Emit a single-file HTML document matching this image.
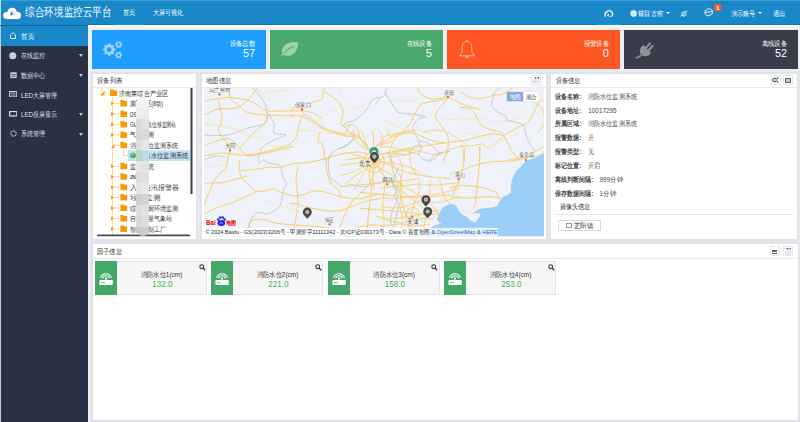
<!DOCTYPE html>
<html><head><meta charset="utf-8">
<title>综合环境监控云平台</title>
<style>
*{margin:0;padding:0;box-sizing:border-box}
html,body{width:800px;height:422px;overflow:hidden}
body{position:relative;background:#eef0f6;font-family:"Liberation Sans",sans-serif;color:#333}
.a{position:absolute}
.caret{position:absolute;left:78.5px;width:0;height:0;border-left:2.5px solid transparent;border-right:2.5px solid transparent;border-top:3px solid #c5c9d0}
.card{position:absolute;top:30px;height:39px}
.panel{position:absolute;background:#fff;box-shadow:0 0 0 2.6px #e2e3e8}
</style></head><body>

<div class="a" style="left:0;top:0;width:800px;height:25px;background:#1888c8;border-top:1px solid #3a9ad2"></div>
<div class="a" style="left:88px;top:24px;width:712px;height:1px;background:#1679b6"></div>
<div class="a" style="left:0;top:0;width:1px;height:25px;background:#cfdbe6"></div>
<svg class="a" style="left:0;top:0" width="24" height="24" viewBox="0 0 24 24">
<g fill="#fff"><circle cx="6.7" cy="15.6" r="3.5"/><circle cx="12.1" cy="12.4" r="4.7"/><circle cx="17.3" cy="15.4" r="3.7"/><rect x="6.7" y="14" width="10.6" height="5.1"/></g>
<path d="M13.6 11.3 C11.6 11.3 10.2 13 10.4 14.6 C10.5 15.6 11.6 15.8 12.4 15 L14.2 13.3 C13.2 14.1 12 14 12.1 13.1 C12.2 12.2 13 11.6 13.6 11.3 Z" fill="#1a7fc4"/>
<path d="M14.2 12.2 C15.2 12.6 15.6 13.6 14.8 14.6 C14.2 15.3 13 15.6 12.6 15.3 C13.6 15 14.6 13.8 14.2 12.2 Z" fill="#8cc3e8"/>
</svg>
<div class="a" style="left:114px;top:24px;width:30px;height:2px;background:#00a6ec"></div>
<div class="a" style="left:597px;top:24px;width:24px;height:2px;background:#00a6ec"></div>
<svg class="a" style="left:604px;top:9.5px" width="10" height="8" viewBox="0 0 10 8"><path d="M1.6 6.8 A3.9 3.9 0 1 1 8.6 5.6" stroke="#f2f7fb" stroke-width="1.3" fill="none"/><path d="M2.5 5.5 L5.2 3.6 L4.6 6.2 Z" fill="#f2f7fb"/><path d="M5.5 6.5 L8.8 5.8" stroke="#f2f7fb" stroke-width="1"/><circle cx="3.2" cy="3" r="0.6" fill="#f2f7fb"/></svg>
<svg class="a" style="left:629.5px;top:9.8px" width="7.5" height="7" viewBox="0 0 7.5 7"><circle cx="3.6" cy="3.5" r="3.2" fill="#eaf3fa"/><path d="M1 2.6 Q3.6 3.6 6.2 2.6 M1 4.5 Q3.6 5.4 6.2 4.5" stroke="#9fcbe6" stroke-width="0.6" fill="none"/></svg>
<div class="a" style="left:665.5px;top:11.5px;border-left:2.3px solid transparent;border-right:2.3px solid transparent;border-top:2.8px solid #fff"></div>
<svg class="a" style="left:680px;top:9.5px" width="8" height="7" viewBox="0 0 8 7"><path d="M0.6 6.4 L7.4 0.6" stroke="#f4f8fb" stroke-width="0.9"/><path d="M2.2 2.4 Q4 1 5.6 2.4 L6.2 5.2 H1.8 Z" stroke="#f4f8fb" stroke-width="0.8" fill="none"/><circle cx="4" cy="6.2" r="0.7" fill="#f4f8fb"/></svg>
<svg class="a" style="left:704px;top:8.3px" width="9.5" height="8.5" viewBox="0 0 9.5 8.5"><ellipse cx="4.7" cy="4.3" rx="3.9" ry="3.3" transform="rotate(-20 4.7 4.3)" stroke="#eef5fa" stroke-width="0.9" fill="none"/><path d="M1.2 4.8 Q4.7 3.2 8.2 3.6" stroke="#eef5fa" stroke-width="0.8" fill="none"/><circle cx="4.8" cy="5" r="0.6" fill="#eef5fa"/></svg>
<div class="a" style="left:713.7px;top:3.6px;width:7.8px;height:7.2px;background:#ff5722;border-radius:1px"></div>
<div class="a" style="left:758px;top:11.5px;border-left:2.2px solid transparent;border-right:2.2px solid transparent;border-top:2.8px solid #fff"></div>

<!-- sidebar -->
<div class="a" style="left:0;top:25px;width:88px;height:397px;background:#293144;border-left:1px solid #c9ccd3"></div>
<div class="a" style="left:0;top:25px;width:88px;height:1px;background:#16608f"></div>
<div class="a" style="top:26px;background:#1888c8;left:1px;width:87px;height:19.6px"></div>
<svg class="a" style="left:10px;top:32px" width="6" height="7" viewBox="0 0 6 7"><path d="M0.5 3 L3 0.6 L5.5 3 V6.5 H0.5 Z" stroke="#fff" stroke-width="0.8" fill="none"/></svg>
<svg class="a" style="left:9.3px;top:51.5px" width="7.6" height="7.6" viewBox="0 0 7.6 7.6"><circle cx="3.8" cy="3.8" r="3.5" fill="#d5d9e1"/><path d="M1 3 Q3.8 4 6.6 3 M1.2 5 Q3.8 5.8 6.4 5" stroke="#a9afba" stroke-width="0.5" fill="none"/></svg>
<div class="caret" style="top:54px"></div>
<svg class="a" style="left:9.6px;top:72.4px" width="7" height="6.4" viewBox="0 0 7 6.4"><rect x="0.3" y="0.3" width="6.4" height="5.8" fill="#cfd3db"/><rect x="1.2" y="2" width="4.6" height="0.8" fill="#3a4255"/><rect x="1.2" y="3.8" width="4.6" height="0.8" fill="#3a4255"/></svg>
<div class="caret" style="top:73.5px"></div>
<svg class="a" style="left:9px;top:91px" width="8.2" height="6.4" viewBox="0 0 8.2 6.4"><rect x="0.5" y="0.5" width="7.2" height="5.4" stroke="#c9cdd5" stroke-width="1" fill="#4a5163"/><path d="M2.8 1.2 V5.2 M4.1 1.2 V5.2 M5.4 1.2 V5.2" stroke="#b9a0a8" stroke-width="0.6"/></svg>
<svg class="a" style="left:9px;top:110.6px" width="8.4" height="6.6" viewBox="0 0 8.4 6.6"><rect x="0.6" y="0.6" width="7.2" height="4.3" stroke="#e3e6ec" stroke-width="1.1" fill="none"/><path d="M3.2 6.1 H5.2" stroke="#e3e6ec" stroke-width="1"/></svg>
<div class="caret" style="top:113px"></div>
<svg class="a" style="left:9.5px;top:130px" width="7" height="7" viewBox="0 0 7 7"><circle cx="3.5" cy="3.5" r="2.6" stroke="#d0d3da" stroke-width="1.2" fill="none" stroke-dasharray="1 0.6"/></svg>
<div class="caret" style="top:132.5px"></div>

<div class="a" style="left:88px;top:25px;width:712px;height:2px;background:#fbfbfd"></div>
<div class="a" style="left:88px;top:25px;width:2px;height:397px;background:#eef1f8"></div>

<div class="card" style="left:92px;width:174px;background:#1e9fff"></div>
<div class="card" style="left:270px;width:173px;background:#4aa96c"></div>
<div class="card" style="left:447px;width:173px;background:#ff5722"></div>
<div class="card" style="left:624px;width:174px;background:#393d49"></div>
<svg class="a" style="left:92px;top:30px" width="40" height="39" viewBox="92 30 40 39">
<path fill-rule="evenodd" fill="#9fd2ff" d="M115.57,48.97 L115.57,50.23 L113.98,51.05 L113.61,51.96 L114.15,53.66 L113.26,54.55 L111.56,54.01 L110.65,54.38 L109.83,55.97 L108.57,55.97 L107.75,54.38 L106.84,54.01 L105.14,54.55 L104.25,53.66 L104.79,51.96 L104.42,51.05 L102.83,50.23 L102.83,48.97 L104.42,48.15 L104.79,47.24 L104.25,45.54 L105.14,44.65 L106.84,45.19 L107.75,44.82 L108.57,43.23 L109.83,43.23 L110.65,44.82 L111.56,45.19 L113.26,44.65 L114.15,45.54 L113.61,47.24 L113.98,48.15 Z M111.60000000000001,49.6 A2.4,2.4 0 1 0 106.8,49.6 A2.4,2.4 0 1 0 111.60000000000001,49.6 Z"/>
<path fill-rule="evenodd" fill="#9fd2ff" d="M122.27,44.12 L122.27,45.08 L121.19,45.67 L120.82,46.30 L120.85,47.54 L120.02,48.02 L118.97,47.38 L118.23,47.38 L117.18,48.02 L116.35,47.54 L116.38,46.30 L116.01,45.67 L114.93,45.08 L114.93,44.12 L116.01,43.53 L116.38,42.90 L116.35,41.66 L117.18,41.18 L118.23,41.82 L118.97,41.82 L120.02,41.18 L120.85,41.66 L120.82,42.90 L121.19,43.53 Z M119.89999999999999,44.6 A1.3,1.3 0 1 0 117.3,44.6 A1.3,1.3 0 1 0 119.89999999999999,44.6 Z"/>
<path fill-rule="evenodd" fill="#9fd2ff" d="M122.27,54.52 L122.27,55.48 L121.19,56.07 L120.82,56.70 L120.85,57.94 L120.02,58.42 L118.97,57.78 L118.23,57.78 L117.18,58.42 L116.35,57.94 L116.38,56.70 L116.01,56.07 L114.93,55.48 L114.93,54.52 L116.01,53.93 L116.38,53.30 L116.35,52.06 L117.18,51.58 L118.23,52.22 L118.97,52.22 L120.02,51.58 L120.85,52.06 L120.82,53.30 L121.19,53.93 Z M119.89999999999999,55.0 A1.3,1.3 0 1 0 117.3,55.0 A1.3,1.3 0 1 0 119.89999999999999,55.0 Z"/>
</svg>
<svg class="a" style="left:278px;top:40px" width="22" height="18" viewBox="278 40 22 18">
<path d="M298 42.2 C290 41.5 283.5 44 282 50 C281.7 51.5 282 53 282.6 54 L281 55.7 L282 56.3 L283.6 54.8 C285 55.8 287.5 56 290 55.5 C296 54 298.3 48 298 42.2 Z" fill="#9dd0ae"/>
<path d="M284.5 53 C287 49.5 290 47.5 294 46.5" stroke="#4aa96c" stroke-width="1" fill="none"/>
</svg>
<svg class="a" style="left:457px;top:39px" width="20" height="21" viewBox="457 39 20 21">
<path d="M467 41.5 C463 41.5 462.2 45 462.2 48 L462.2 52 L459.5 55.8 L474.5 55.8 L471.8 52 L471.8 48 C471.8 45 471 41.5 467 41.5 Z" fill="none" stroke="#ffc1a8" stroke-width="0.9"/>
<circle cx="467" cy="41" r="0.9" fill="#ffc1a8"/>
<path d="M465.2 56.5 A1.8 1.8 0 0 0 468.8 56.5" fill="#ffc1a8"/>
</svg>
<svg class="a" style="left:633px;top:39px" width="23" height="22" viewBox="633 39 23 22">
<path d="M643.5 45 L651 52.5 C649 56.5 644.5 57.5 641.5 55 C638.8 52.3 639.5 47.5 643.5 45 Z" fill="#8e929b"/>
<path d="M646.2 47.5 L650 43.5 M648.8 50 L652.6 46" stroke="#8e929b" stroke-width="2" stroke-linecap="round"/>
<path d="M641 55.5 L636.5 58" stroke="#8e929b" stroke-width="1.6" stroke-linecap="round"/>
</svg>


<div class="panel" style="left:93px;top:74px;width:103px;height:164.5px"></div>
<div class="panel" style="left:202px;top:74px;width:344px;height:164.5px"></div>
<div class="panel" style="left:551.3px;top:74px;width:246.2px;height:164.5px"></div>
<div class="panel" style="left:93px;top:243.5px;width:704.5px;height:176px"></div>

<div class="a" style="left:93px;top:87px;width:103px;height:1px;background:#eaeaea"></div>
<svg class="a" style="left:92px;top:88px" width="105" height="151" viewBox="92 88 105 151">
 <g stroke="#ffa41f" stroke-width="0.8" stroke-dasharray="1.2 1" fill="none">
  <path d="M102 88 V91"/>
  <path d="M112.5 97 V236"/>
  <path d="M104 93 H109"/>
  <path d="M113 103.55 H119 M113 114.00 H119 M113 124.45 H119 M113 134.90 H119 M113 145.35 H119 M113 166.25 H119 M113 176.70 H119 M113 187.15 H119 M113 197.60 H119 M113 208.05 H119 M113 218.50 H119 M113 228.95 H119"/>
  <path d="M123.5 150 V155.5 H128"/>
 </g>
 <g fill="#ff9f0a">
  <path d="M100 95.5 L104.5 91 L104.5 95.5 Z"/>
  <path d="M111 101.35 L114 103.55 L111 105.75 Z"/><path d="M111 111.80 L114 114.00 L111 116.20 Z"/><path d="M111 122.25 L114 124.45 L111 126.65 Z"/><path d="M111 132.70 L114 134.90 L111 137.10 Z"/><path d="M111 164.05 L114 166.25 L111 168.45 Z"/><path d="M111 174.50 L114 176.70 L111 178.90 Z"/><path d="M111 184.95 L114 187.15 L111 189.35 Z"/><path d="M111 195.40 L114 197.60 L111 199.80 Z"/><path d="M111 205.85 L114 208.05 L111 210.25 Z"/><path d="M111 216.30 L114 218.50 L111 220.70 Z"/><path d="M111 226.75 L114 228.95 L111 231.15 Z"/>
  <path d="M111 148 L114.5 143.5 L114.5 148 Z"/>
 </g>
 <g fill="#ff9800">
  <path d="M110 89.5 h3 l0.8 1 h3.3 v5.5 h-7.1 z"/>
  <path d="M120.4 100.05 h3 l0.8 1 h2.8 v5.5 h-6.6 z"/><path d="M120.4 110.50 h3 l0.8 1 h2.8 v5.5 h-6.6 z"/><path d="M120.4 120.95 h3 l0.8 1 h2.8 v5.5 h-6.6 z"/><path d="M120.4 131.40 h3 l0.8 1 h2.8 v5.5 h-6.6 z"/><path d="M120.4 141.85 h3 l0.8 1 h2.8 v5.5 h-6.6 z"/><path d="M120.4 162.75 h3 l0.8 1 h2.8 v5.5 h-6.6 z"/><path d="M120.4 173.20 h3 l0.8 1 h2.8 v5.5 h-6.6 z"/><path d="M120.4 183.65 h3 l0.8 1 h2.8 v5.5 h-6.6 z"/><path d="M120.4 194.10 h3 l0.8 1 h2.8 v5.5 h-6.6 z"/><path d="M120.4 204.55 h3 l0.8 1 h2.8 v5.5 h-6.6 z"/><path d="M120.4 215.00 h3 l0.8 1 h2.8 v5.5 h-6.6 z"/><path d="M120.4 225.45 h3 l0.8 1 h2.8 v5.5 h-6.6 z"/>
 </g>
 <rect x="128" y="150.3" width="62" height="10.7" fill="#bfe3f5"/>
 <circle cx="133" cy="155.5" r="2.8" fill="#3fb84a"/>
 <circle cx="132.3" cy="154.6" r="1" fill="#9be89a"/>
 <rect x="190.5" y="88" width="2" height="106" fill="#3c3f46"/>
 <rect x="97" y="234.5" width="93" height="1.8" rx="0.9" fill="#4a4d55"/>
</svg>

<svg class="a" style="left:0;top:0;z-index:60" width="200" height="240" viewBox="0 0 200 240"><defs><clipPath id="stripclip"><rect x="136" y="97" width="14" height="139" rx="7" ry="7"/></clipPath></defs><g clip-path="url(#stripclip)"><rect x="134.5" y="97" width="7.25" height="11.05" fill="#f4f4f4"/><rect x="141.75" y="97" width="7.25" height="11.05" fill="#f2f2f2"/><rect x="134.5" y="108" width="7.25" height="11.05" fill="#eeeeee"/><rect x="141.75" y="108" width="7.25" height="11.05" fill="#ececec"/><rect x="134.5" y="119" width="7.25" height="11.05" fill="#d9d9d9"/><rect x="141.75" y="119" width="7.25" height="11.05" fill="#e3e3e3"/><rect x="134.5" y="130" width="7.25" height="10.05" fill="#d6d6d6"/><rect x="141.75" y="130" width="7.25" height="10.05" fill="#dadada"/><rect x="134.5" y="140" width="7.25" height="10.35" fill="#dedede"/><rect x="141.75" y="140" width="7.25" height="10.35" fill="#e6e6e6"/><rect x="134.5" y="150.3" width="7.25" height="10.75" fill="#b7d9c4"/><rect x="141.75" y="150.3" width="7.25" height="10.75" fill="#c4dbe6"/><rect x="134.5" y="161" width="7.25" height="11.05" fill="#e6e6e6"/><rect x="141.75" y="161" width="7.25" height="11.05" fill="#e2e2e2"/><rect x="134.5" y="172" width="7.25" height="11.05" fill="#dcdcdc"/><rect x="141.75" y="172" width="7.25" height="11.05" fill="#e0e0e0"/><rect x="134.5" y="183" width="7.25" height="11.05" fill="#e4e4e4"/><rect x="141.75" y="183" width="7.25" height="11.05" fill="#e9e9e9"/><rect x="134.5" y="194" width="7.25" height="11.05" fill="#cfcfcf"/><rect x="141.75" y="194" width="7.25" height="11.05" fill="#d4d4d4"/><rect x="134.5" y="205" width="7.25" height="11.05" fill="#dcdcdc"/><rect x="141.75" y="205" width="7.25" height="11.05" fill="#e2e2e2"/><rect x="134.5" y="216" width="7.25" height="11.05" fill="#d9d9d9"/><rect x="141.75" y="216" width="7.25" height="11.05" fill="#dddddd"/><rect x="134.5" y="227" width="7.25" height="9.05" fill="#c9c9c9"/><rect x="141.75" y="227" width="7.25" height="9.05" fill="#cccccc"/></g></svg>

<div class="a" style="left:202px;top:87px;width:344px;height:1px;background:#eaeaea"></div>
<div class="a" style="left:531.2px;top:75px;width:9.8px;height:10.9px;border:1px solid #e6e6e6;background:#fff;border-radius:1px"></div>
<svg class="a" style="left:532px;top:76px" width="8" height="9" viewBox="0 0 8 9"><rect x="0.8" y="3.2" width="6.4" height="4.6" fill="#e4e6ea"/><circle cx="3.5" cy="1.8" r="0.9" fill="#5a6a80"/><circle cx="6.3" cy="1.8" r="0.9" fill="#4a4a4a"/><path d="M1.3 6 L2.5 5 L3.4 5.8" stroke="#999" stroke-width="0.5" fill="none"/></svg>
<svg class="a" style="left:204px;top:88px" width="340" height="149" viewBox="204 88 340 149">
<rect x="204" y="88" width="340" height="149" fill="#eff2fa"/>
<path d="M204.0,124.0 C205.8,124.2 210.7,124.3 215.0,125.0 C219.3,125.7 224.2,126.2 230.0,128.0 C235.8,129.8 244.7,134.5 250.0,136.0 C255.3,137.5 260.0,136.8 262.0,137.0 M256.0,88.0 C257.0,89.2 259.7,93.0 262.0,95.0 C264.3,97.0 268.7,99.2 270.0,100.0 M340.0,88.0 C340.8,90.0 342.0,96.7 345.0,100.0 C348.0,103.3 353.8,108.0 358.0,108.0 C362.2,108.0 368.0,101.3 370.0,100.0 M300.0,132.0 C302.0,131.0 307.0,129.3 312.0,126.0 C317.0,122.7 324.5,115.0 330.0,112.0 C335.5,109.0 342.5,108.7 345.0,108.0 M204.0,168.0 C205.8,167.7 210.7,166.7 215.0,166.0 C219.3,165.3 227.5,164.3 230.0,164.0 M266.0,200.0 C268.3,201.0 274.3,204.0 280.0,206.0 C285.7,208.0 293.7,209.3 300.0,212.0 C306.3,214.7 315.0,220.3 318.0,222.0 M430.0,112.0 C431.7,113.0 435.0,116.7 440.0,118.0 C445.0,119.3 453.3,120.0 460.0,120.0 C466.7,120.0 473.3,117.7 480.0,118.0 C486.7,118.3 493.3,122.0 500.0,122.0 C506.7,122.0 513.3,119.7 520.0,118.0 C526.7,116.3 536.7,113.0 540.0,112.0 M460.0,130.0 C461.7,130.7 465.0,133.0 470.0,134.0 C475.0,135.0 486.7,135.7 490.0,136.0 M455.0,210.0 C457.5,210.3 464.2,211.3 470.0,212.0 C475.8,212.7 486.7,213.7 490.0,214.0 M404.0,110.0 C405.3,111.3 409.3,114.7 412.0,118.0 C414.7,121.3 417.0,127.3 420.0,130.0 C423.0,132.7 428.3,133.3 430.0,134.0 M384.0,120.0 C385.3,120.7 389.3,122.7 392.0,124.0 C394.7,125.3 398.7,127.3 400.0,128.0 M500.0,140.0 C501.7,139.7 506.7,139.3 510.0,138.0 C513.3,136.7 518.3,133.0 520.0,132.0 M350.0,204.0 C348.3,205.3 343.7,209.0 340.0,212.0 C336.3,215.0 330.0,220.3 328.0,222.0 M256.0,150.0 C258.3,149.3 264.3,146.0 270.0,146.0 C275.7,146.0 286.7,149.3 290.0,150.0 M204.0,123.1 C205.8,123.4 211.0,124.3 214.5,124.8 C218.0,125.4 221.0,125.7 225.1,126.6 C229.1,127.5 235.0,128.4 239.1,130.1 C243.2,131.9 247.9,136.0 249.6,137.1 M256.6,88.0 C257.8,88.9 260.7,92.7 263.6,93.3 C266.6,93.8 269.1,92.1 274.2,91.5 C279.2,90.9 290.7,90.0 294.0,89.8 M386.5,102.0 C388.3,101.7 393.0,100.4 397.1,100.3 C401.1,100.1 407.6,101.5 411.1,101.2 C414.6,100.9 416.9,99.0 418.1,98.5 M290.0,131.9 C292.9,131.6 301.7,129.8 307.5,130.1 C313.4,130.4 319.2,133.3 325.1,133.6 C330.9,133.9 336.8,131.6 342.6,131.9 C348.5,132.2 357.3,134.8 360.2,135.4" stroke="#f8e6bb" stroke-width="0.9" fill="none"/>
<path d="M253.0,88.0 C254.8,90.3 261.7,98.0 264.0,102.0 C266.3,106.0 266.8,108.5 267.0,112.0 C267.2,115.5 268.2,120.3 265.0,123.0 C261.8,125.7 254.3,126.0 248.0,128.0 C241.7,130.0 234.3,133.8 227.0,135.0 C219.7,136.2 207.8,135.0 204.0,135.0 M267.0,112.0 C268.2,113.8 272.8,119.5 274.0,123.0 C275.2,126.5 272.0,131.0 274.0,133.0 C276.0,135.0 286.0,133.8 286.0,135.0 C286.0,136.2 278.0,137.8 274.0,140.0 C270.0,142.2 264.7,144.3 262.0,148.0 C259.3,151.7 257.8,160.0 258.0,162.0 C258.2,164.0 262.6,160.3 263.5,160.0 M263.5,160.0 C264.7,160.6 268.0,162.7 270.7,163.6 C273.4,164.5 277.6,163.0 279.7,165.4 C281.8,167.8 282.1,175.0 283.3,178.0 C284.5,181.0 286.9,181.3 286.9,183.4 C286.9,185.5 284.2,187.6 283.3,190.6 C282.4,193.6 282.4,198.4 281.5,201.4 C280.6,204.4 280.3,206.5 277.9,208.6 C275.5,210.7 270.3,213.4 267.0,214.0 C263.7,214.6 260.7,211.4 258.0,212.3 C255.3,213.2 252.3,216.8 250.8,219.5 C249.3,222.2 249.3,227.0 249.0,228.5 M380.0,97.0 C378.7,97.5 374.2,98.0 372.0,100.0 C369.8,102.0 369.8,105.7 367.0,109.0 C364.2,112.3 358.5,117.7 355.0,120.0 C351.5,122.3 347.8,121.8 346.0,123.0 C344.2,124.2 342.8,125.0 344.0,127.0 C345.2,129.0 351.8,132.7 353.0,135.0 C354.2,137.3 352.7,139.0 351.0,141.0 C349.3,143.0 345.8,145.3 343.0,147.0 C340.2,148.7 336.3,149.2 334.0,151.0 C331.7,152.8 329.9,154.8 329.0,158.0 C328.1,161.2 328.4,167.0 328.7,170.4 C329.0,173.8 329.3,176.5 330.7,178.5 C332.1,180.5 334.8,181.2 336.8,182.6 C338.9,184.0 340.6,186.4 343.0,186.7 C345.4,187.0 347.7,184.6 351.1,184.6 C354.5,184.6 359.9,186.7 363.3,186.7 C366.7,186.7 368.7,185.3 371.5,184.6 C374.3,183.9 376.2,183.2 380.0,182.6 C383.8,182.0 391.7,181.3 394.0,181.0 M376.0,103.8 C376.6,102.9 378.0,100.0 379.5,98.5 C381.0,97.0 383.6,96.8 384.8,95.0 C386.0,93.2 386.2,89.2 386.5,88.0 M384.8,91.5 C385.4,92.7 386.9,96.2 388.3,98.5 C389.8,100.8 391.8,103.2 393.5,105.5 C395.2,107.8 395.3,111.1 398.8,112.6 C402.3,114.1 410.5,113.7 414.6,114.3 C418.7,114.9 421.7,115.5 423.4,116.0 C425.1,116.5 425.9,116.4 425.0,117.0 C424.1,117.6 420.0,118.0 418.0,119.6 C416.0,121.2 413.4,124.3 412.8,126.6 C412.2,128.9 413.4,131.3 414.6,133.6 C415.8,135.9 417.8,139.1 419.9,140.6 C421.9,142.1 424.6,141.2 426.9,142.4 C429.2,143.6 431.8,145.8 433.9,147.6 C435.9,149.3 438.9,151.1 439.2,152.9 C439.5,154.7 437.4,156.7 435.6,158.2 C433.8,159.7 429.8,161.4 428.6,162.0 M500.4,88.0 C499.5,88.6 496.2,90.0 495.0,91.5 C493.8,93.0 493.9,94.8 493.3,96.8 C492.7,98.8 491.7,102.0 491.6,103.8 C491.5,105.5 491.3,105.8 492.5,107.3 C493.7,108.8 496.4,111.1 498.6,112.6 C500.8,114.0 504.1,114.7 505.6,116.0 C507.1,117.3 506.2,119.6 507.4,120.5 C508.6,121.4 510.0,120.6 512.6,121.3 C515.2,122.0 521.2,123.3 523.2,124.8 C525.2,126.2 524.3,128.0 524.9,130.0 C525.5,132.0 525.8,134.7 526.7,137.0 C527.6,139.3 529.0,142.0 530.2,144.1 C531.4,146.2 533.1,147.6 533.7,149.4 C534.3,151.2 533.7,153.8 533.7,154.7 M398.6,167.3 C397.8,169.6 394.4,177.2 394.0,181.0 C393.6,184.8 396.4,187.4 396.4,190.0 C396.4,192.6 393.6,194.5 394.0,196.8 C394.4,199.1 398.2,200.6 398.6,203.6 C399.0,206.6 397.2,211.2 396.4,215.0 C395.6,218.8 394.4,224.5 394.0,226.4 M416.8,140.0 C417.6,141.1 421.0,144.2 421.4,146.8 C421.8,149.5 418.0,153.6 419.1,155.9 C420.2,158.2 425.2,160.9 428.2,160.5 C431.2,160.1 433.7,155.1 437.3,153.6 C440.9,152.1 447.9,151.8 450.0,151.4 M204.0,160.0 C205.8,159.3 211.5,156.5 215.0,156.0 C218.5,155.5 223.3,156.8 225.0,157.0 M340.0,148.5 C341.4,147.8 346.2,145.9 348.5,144.2 C350.9,142.5 353.5,140.9 354.2,138.5 C354.9,136.2 353.0,131.4 352.8,130.0 M420.0,144.2 C419.0,144.7 415.8,145.4 413.9,147.0 C411.9,148.7 411.7,153.0 408.2,154.1 C404.6,155.3 395.4,153.4 392.6,154.1 C389.7,154.9 390.9,156.3 391.1,158.4 C391.4,160.5 392.8,164.6 394.0,166.9 C395.2,169.3 397.1,170.7 398.2,172.6 C399.4,174.5 400.8,175.9 401.1,178.3 C401.3,180.7 399.9,185.4 399.7,186.8 M391.9,180.0 C392.2,181.1 392.4,184.4 393.3,186.6 C394.1,188.8 396.8,190.4 397.2,193.3 C397.7,196.1 396.8,200.8 395.9,203.9 C395.0,207.0 392.8,208.7 391.9,211.8 C391.1,214.9 390.4,220.0 390.6,222.4 C390.8,224.9 392.8,225.8 393.3,226.4" stroke="#aeb1bb" stroke-width="0.6" fill="none"/>
<path d="M204.0,101.0 C206.3,100.6 213.7,99.1 218.0,98.5 C222.3,97.9 225.0,97.3 230.0,97.6 C235.0,97.9 243.3,99.1 248.0,100.3 C252.7,101.5 254.8,103.2 258.0,105.0 C261.2,106.8 261.0,109.8 267.0,110.8 C273.0,111.8 286.8,110.6 294.0,110.8 C301.2,111.0 305.3,110.8 310.0,112.0 C314.7,113.2 320.0,117.0 322.0,118.0 M204.0,115.0 C206.3,114.0 212.7,110.2 218.0,109.0 C223.3,107.8 231.0,109.5 236.0,108.0 C241.0,106.5 244.5,103.3 248.0,100.0 C251.5,96.7 255.5,90.0 257.0,88.0 M230.0,88.0 C230.0,89.7 228.5,95.1 230.0,98.0 C231.5,100.9 236.0,103.1 239.0,105.5 C242.0,107.9 243.3,111.0 248.0,112.6 C252.7,114.2 259.3,114.4 267.0,115.0 C274.7,115.6 289.5,115.8 294.0,116.0 M218.0,98.5 C218.6,101.1 220.9,109.9 221.5,114.0 C222.1,118.1 222.1,120.3 221.5,123.0 C220.9,125.7 217.4,127.1 218.0,130.0 C218.6,132.9 223.0,137.4 225.0,140.6 C227.0,143.8 229.7,145.4 230.0,149.0 C230.3,152.6 227.7,158.5 227.0,162.0 C226.3,165.5 226.4,168.5 225.6,170.0 C224.8,171.5 223.8,169.4 222.0,171.0 C220.2,172.6 216.6,177.1 214.8,179.8 C213.0,182.5 212.4,184.3 211.2,187.0 C210.0,189.7 208.8,193.0 207.6,196.0 C206.4,199.0 204.6,203.5 204.0,205.0 M239.0,149.4 C240.5,147.7 245.1,142.2 248.0,139.0 C250.9,135.8 253.8,132.7 256.6,130.0 C259.4,127.3 263.3,125.5 265.0,123.0 C266.7,120.5 266.7,116.3 267.0,115.0 M204.0,146.0 C206.3,145.1 213.7,141.8 218.0,140.6 C222.3,139.4 226.5,137.8 230.0,139.0 C233.5,140.2 236.0,145.0 239.0,147.6 C242.0,150.2 242.2,154.4 248.0,154.7 C253.8,155.0 266.3,151.8 274.0,149.4 C281.7,147.1 289.7,145.3 294.0,140.6 C298.3,135.9 298.3,125.4 300.0,121.0 C301.7,116.6 303.3,115.2 304.0,114.0 M204.0,156.0 C207.0,155.5 216.2,153.2 222.0,153.0 C227.8,152.8 233.3,154.7 239.0,155.0 C244.7,155.3 246.8,156.5 256.0,155.0 C265.2,153.5 287.7,147.5 294.0,146.0 M302.0,109.0 C302.3,109.8 302.2,112.2 304.0,114.0 C305.8,115.8 310.0,117.8 313.0,120.0 C316.0,122.2 318.2,125.0 322.0,127.0 C325.8,129.0 332.0,130.7 336.0,132.0 C340.0,133.3 342.8,134.5 346.0,135.0 C349.2,135.5 352.0,133.8 355.0,135.0 C358.0,136.2 361.7,139.7 364.0,142.0 C366.3,144.3 367.3,146.8 369.0,149.0 C370.7,151.2 373.2,154.0 374.0,155.0 M290.0,115.0 C291.7,115.2 295.8,114.7 300.0,116.0 C304.2,117.3 310.8,120.7 315.0,123.0 C319.2,125.3 320.3,128.2 325.0,130.0 C329.7,131.8 338.8,134.8 343.0,134.0 C347.2,133.2 347.7,126.0 350.0,125.0 C352.3,124.0 355.3,126.0 357.0,128.0 C358.7,130.0 358.7,134.0 360.0,137.0 C361.3,140.0 363.0,143.5 365.0,146.0 C367.0,148.5 370.8,151.0 372.0,152.0 M325.0,88.0 C324.7,88.8 323.5,91.2 323.0,93.0 C322.5,94.8 323.7,97.5 322.0,99.0 C320.3,100.5 315.5,100.7 313.0,102.0 C310.5,103.3 308.8,105.8 307.0,107.0 C305.2,108.2 304.0,109.0 302.0,109.0 C300.0,109.0 297.0,106.7 295.0,107.0 C293.0,107.3 290.8,110.3 290.0,111.0 M325.0,92.0 C326.5,93.0 331.3,95.7 334.0,98.0 C336.7,100.3 339.5,103.5 341.0,106.0 C342.5,108.5 343.0,110.2 343.0,113.0 C343.0,115.8 341.0,120.8 341.0,123.0 C341.0,125.2 341.5,125.7 343.0,126.0 C344.5,126.3 348.8,125.2 350.0,125.0 M320.0,132.0 C319.7,133.5 317.5,138.7 318.0,141.0 C318.5,143.3 321.8,142.5 323.0,146.0 C324.2,149.5 324.7,159.3 325.0,162.0 M240.0,160.0 C239.8,161.5 238.8,166.0 239.1,169.0 C239.4,172.0 240.5,175.6 241.8,178.0 C243.2,180.4 245.4,181.6 247.2,183.4 C249.0,185.2 251.1,187.5 252.6,188.8 C254.1,190.2 253.9,191.2 256.3,191.5 C258.7,191.8 264.3,191.0 267.0,190.6 C269.7,190.2 270.1,188.5 272.5,188.8 C274.9,189.1 277.9,191.2 281.5,192.4 C285.1,193.6 290.6,195.6 294.0,196.0 C297.4,196.4 298.4,195.7 302.2,194.8 C305.9,193.9 311.8,190.9 316.5,190.7 C321.2,190.5 326.6,192.8 330.7,193.8 C334.8,194.8 336.5,196.0 340.9,196.8 C345.3,197.7 352.8,198.9 357.2,198.9 C361.6,198.9 363.6,197.7 367.4,196.8 C371.2,196.0 377.9,194.3 380.0,193.8 M204.0,183.4 C207.0,183.2 216.0,183.4 222.0,182.5 C228.0,181.6 235.8,179.1 240.0,178.0 C244.2,176.9 246.0,176.5 247.2,176.2 M240.0,170.8 C243.0,170.5 253.2,169.6 258.0,169.0 C262.8,168.4 265.3,167.5 268.9,167.2 C272.5,166.9 275.5,167.8 279.7,167.2 C283.9,166.6 288.9,164.4 294.0,163.6 C299.1,162.8 304.9,163.1 310.4,162.2 C315.8,161.3 321.6,159.4 326.7,158.1 C331.8,156.8 335.8,155.1 340.9,154.1 C346.0,153.1 352.3,152.0 357.2,152.0 C362.1,152.0 367.9,153.7 370.0,154.0 M204.0,214.0 C205.8,213.1 210.3,210.4 214.8,208.6 C219.3,206.8 225.6,205.3 231.0,203.2 C236.4,201.1 243.0,197.9 247.2,196.0 C251.4,194.1 254.8,192.2 256.3,191.5 M247.2,232.0 C247.8,230.2 248.1,223.4 250.8,221.3 C253.5,219.2 259.3,219.2 263.5,219.5 C267.7,219.8 270.9,222.1 276.0,223.0 C281.1,223.9 288.3,224.4 294.0,224.9 C299.7,225.4 304.0,225.5 310.0,226.0 C316.0,226.5 326.7,227.7 330.0,228.0 M290.0,203.0 C291.7,203.3 296.8,204.2 300.2,205.0 C303.6,205.8 305.3,207.0 310.4,208.0 C315.5,209.0 325.3,210.7 330.7,211.0 C336.1,211.3 338.9,211.0 343.0,210.0 C347.1,209.0 351.1,206.5 355.2,205.0 C359.3,203.5 363.3,202.0 367.4,201.0 C371.5,200.0 377.9,199.2 380.0,198.9 M298.1,166.3 C297.8,168.7 296.1,174.7 296.1,180.5 C296.1,186.3 298.1,194.8 298.1,200.9 C298.1,207.0 296.8,212.8 296.1,217.2 C295.4,221.6 294.4,225.7 294.0,227.4 M326.7,158.0 C326.7,160.1 326.0,166.3 326.7,170.4 C327.4,174.5 328.7,179.2 330.7,182.6 C332.7,186.0 337.2,188.3 338.9,190.7 C340.6,193.1 340.6,195.8 340.9,196.8 M375.5,162.2 C374.8,165.2 373.5,175.8 371.5,180.5 C369.5,185.2 366.7,186.9 363.3,190.7 C359.9,194.4 354.5,198.2 351.1,203.0 C347.7,207.8 345.0,214.4 343.0,219.2 C341.0,223.9 339.6,229.4 338.9,231.5 M375.5,162.2 C372.4,164.2 362.3,170.7 357.2,174.4 C352.1,178.1 347.0,182.9 345.0,184.6 M448.0,97.6 C446.5,98.0 442.8,99.4 439.0,100.3 C435.2,101.2 428.2,102.1 425.0,103.0 C421.8,103.9 421.7,103.6 420.0,105.5 C418.3,107.4 416.4,111.1 414.6,114.3 C412.8,117.5 411.4,121.9 409.3,124.8 C407.2,127.7 404.9,130.1 402.3,131.9 C399.7,133.7 396.1,134.0 393.5,135.4 C390.9,136.8 389.4,138.8 386.5,140.6 C383.6,142.4 378.1,143.6 376.0,146.0 C373.9,148.4 374.3,153.5 374.0,155.0 M448.0,98.5 C446.2,100.5 439.5,107.6 437.4,110.8 C435.3,114.0 435.3,115.8 435.6,117.8 C435.9,119.8 437.7,121.0 439.2,123.0 C440.7,125.0 442.9,127.7 444.4,130.0 C445.9,132.3 447.4,134.1 448.0,137.0 C448.6,139.9 448.3,144.7 448.0,147.6 C447.7,150.5 447.1,152.3 446.2,154.7 C445.3,157.1 443.3,160.8 442.7,162.0 M448.0,97.0 C449.3,97.7 453.0,99.6 456.0,101.0 C459.0,102.4 461.8,104.0 466.0,105.5 C470.2,107.0 478.5,109.2 481.0,110.0 M418.0,88.0 C418.3,88.8 418.2,91.2 420.0,93.0 C421.8,94.8 425.4,97.6 428.6,98.5 C431.8,99.4 435.8,98.9 439.0,98.5 C442.2,98.1 446.5,96.4 448.0,96.0 M376.0,155.0 C379.0,154.4 387.2,152.8 394.0,151.4 C400.8,150.0 410.8,147.9 416.8,146.8 C422.8,145.7 424.5,145.8 430.0,145.0 C435.5,144.2 444.0,143.1 450.0,142.3 C456.0,141.5 459.3,141.4 466.0,140.0 C472.7,138.6 483.7,134.8 490.0,134.0 C496.3,133.2 501.6,135.2 503.9,135.4 M374.0,158.0 C376.6,159.2 384.2,162.7 389.5,165.0 C394.8,167.3 399.1,169.9 405.5,171.8 C411.9,173.7 420.8,175.3 428.2,176.4 C435.6,177.5 446.4,178.2 450.0,178.6 M374.0,158.0 C375.4,160.7 379.4,169.4 382.7,174.0 C386.0,178.6 389.1,181.3 394.0,185.5 C398.9,189.7 407.4,195.2 412.3,199.0 C417.2,202.8 421.0,205.4 423.6,208.2 C426.2,211.0 427.3,214.7 428.0,216.0 M374.0,158.0 C373.2,160.7 369.5,168.7 369.1,174.0 C368.7,179.3 371.4,184.3 371.4,190.0 C371.4,195.7 369.9,200.5 369.1,208.2 C368.3,215.9 367.2,231.4 366.8,236.0 M360.0,192.3 C363.8,192.7 375.1,193.8 382.7,194.5 C390.3,195.2 397.9,196.4 405.5,196.8 C413.1,197.2 420.8,197.2 428.2,196.8 C435.6,196.4 446.4,194.9 450.0,194.5 M360.0,208.2 C364.6,208.6 379.0,209.8 387.3,210.5 C395.6,211.2 403.2,211.9 410.0,212.7 C416.8,213.4 423.2,214.9 428.2,215.0 C433.2,215.1 438.0,213.3 440.0,213.0 M394.0,140.0 C393.2,142.3 389.5,147.9 389.5,153.6 C389.5,159.3 392.1,166.8 394.0,174.0 C395.9,181.2 399.0,190.0 400.9,196.8 C402.8,203.6 404.0,208.5 405.5,215.0 C407.0,221.5 409.2,232.5 410.0,236.0 M373.6,158.0 C373.6,155.0 373.9,144.7 373.6,140.0 C373.3,135.3 372.3,131.7 372.0,130.0 M374.0,158.0 C371.7,158.0 364.8,157.9 360.0,158.2 C355.2,158.5 347.5,159.7 345.0,160.0 M460.0,91.5 C461.5,92.4 465.3,95.6 468.8,96.8 C472.3,98.0 476.6,98.8 481.0,98.5 C485.4,98.2 491.2,95.7 495.0,95.0 C498.8,94.3 501.0,95.3 503.9,94.1 C506.8,92.9 511.2,89.0 512.6,88.0 M460.0,107.3 C461.8,107.6 467.9,107.5 470.5,109.0 C473.1,110.5 474.1,113.4 475.8,116.0 C477.6,118.6 478.4,122.5 481.0,124.8 C483.6,127.1 488.4,128.8 491.6,130.0 C494.8,131.2 498.1,130.4 500.4,131.9 C502.7,133.4 503.9,136.0 505.6,138.9 C507.4,141.8 509.1,146.5 510.9,149.4 C512.6,152.3 514.9,154.6 516.1,156.4 C517.3,158.2 517.7,159.4 518.0,160.0 M503.9,135.4 C505.9,134.2 512.3,130.5 516.1,128.4 C519.9,126.3 523.8,125.6 526.7,123.0 C529.6,120.4 531.7,116.1 533.7,112.6 C535.8,109.1 537.0,104.0 539.0,102.0 C541.0,100.0 544.8,100.6 546.0,100.3 M464.4,149.4 L464.4,162.0 M480.2,145.9 L479.3,162.0 M509.0,160.0 C511.1,159.7 517.0,158.8 521.4,158.2 C525.8,157.6 531.3,157.3 535.4,156.4 C539.5,155.5 544.2,153.6 546.0,153.0 M450.0,174.0 C452.3,173.2 458.7,171.2 463.6,169.5 C468.5,167.8 474.2,165.2 479.5,163.9 C484.8,162.6 489.4,162.2 495.5,161.6 C501.6,161.0 510.6,161.4 515.9,160.5 C521.2,159.6 522.6,158.2 527.3,155.9 C532.0,153.6 541.1,148.3 543.9,146.8 M479.5,146.8 C479.5,149.5 479.9,156.2 479.5,162.7 C479.1,169.1 478.1,178.7 477.3,185.5 C476.6,192.3 475.8,199.8 475.0,203.6 C474.2,207.4 473.1,207.4 472.7,208.2 M463.6,149.0 C463.6,151.3 464.0,158.5 463.6,162.7 C463.2,166.9 462.5,170.2 461.4,174.0 C460.3,177.8 458.3,181.7 456.8,185.5 C455.3,189.3 453.1,194.9 452.3,196.8 M450.0,196.8 C453.0,197.0 461.4,198.0 468.2,198.0 C475.0,198.0 485.2,196.6 490.9,196.8 C496.6,197.0 500.4,198.7 502.3,199.1 M450.0,187.7 C452.3,187.3 458.3,185.5 463.6,185.5 C468.9,185.5 476.5,186.6 481.8,187.7 C487.1,188.8 492.5,190.4 495.5,192.3 C498.5,194.2 499.2,198.0 500.0,199.1 M376.0,146.0 C378.3,145.3 386.0,143.8 390.0,142.0 C394.0,140.2 396.2,136.5 400.0,135.0 C403.8,133.5 408.0,132.2 413.0,133.0 C418.0,133.8 424.7,138.3 430.0,140.0 C435.3,141.7 442.5,142.5 445.0,143.0 M376.0,216.0 C379.2,217.0 389.0,220.3 395.0,222.0 C401.0,223.7 406.2,225.7 412.0,226.0 C417.8,226.3 427.0,224.3 430.0,224.0 M355.0,228.0 C357.5,227.5 365.0,225.3 370.0,225.0 C375.0,224.7 382.5,225.8 385.0,226.0" stroke="#f8d065" stroke-width="1.0" fill="none" stroke-linejoin="round"/>
<path d="M340.0,135.7 C341.4,135.8 345.9,136.2 348.5,136.4 C351.1,136.6 353.3,136.4 355.6,137.1 C358.0,137.8 360.8,139.2 362.7,140.7 C364.6,142.1 365.3,143.6 367.0,145.6 C368.6,147.6 371.7,151.5 372.7,152.7 M352.8,130.0 C353.0,131.2 353.5,135.0 354.2,137.1 C354.9,139.2 355.2,140.9 357.0,142.8 C358.9,144.7 363.2,147.0 365.6,148.5 C367.9,149.9 370.3,150.8 371.2,151.3 M361.3,130.0 C361.8,131.4 363.2,135.9 364.1,138.5 C365.1,141.1 366.5,144.4 367.0,145.6 M378.4,145.6 C379.1,144.4 381.2,140.2 382.6,138.5 C384.0,136.9 385.7,137.1 386.9,135.7 C388.1,134.3 389.2,130.9 389.7,130.0 M386.9,135.7 C389.0,135.2 395.6,133.8 399.7,132.8 C403.7,131.9 409.1,130.5 411.0,130.0 M379.8,147.0 C381.4,147.0 386.9,146.8 389.7,147.0 C392.6,147.3 394.0,147.8 396.8,148.5 C399.7,149.2 402.9,150.4 406.8,151.3 C410.6,152.3 417.8,153.7 420.0,154.1 M374.1,162.7 C376.2,161.7 381.9,158.2 386.9,157.0 C391.8,155.8 398.4,156.8 403.9,155.6 C409.4,154.4 417.3,150.8 420.0,149.9 M374.1,162.7 C376.7,162.7 384.7,162.2 389.7,162.7 C394.7,163.1 398.9,164.1 403.9,165.5 C409.0,166.9 417.3,170.2 420.0,171.2 M374.1,162.7 C375.5,163.9 379.3,167.4 382.6,169.8 C385.9,172.1 390.4,174.0 394.0,176.9 C397.5,179.7 402.3,185.2 403.9,186.8 M374.1,162.7 C373.9,164.3 372.7,168.1 372.7,172.6 C372.7,177.2 373.9,187.1 374.1,189.9 M374.1,162.7 C372.2,163.4 366.5,165.3 362.7,166.9 C358.9,168.6 355.2,171.2 351.4,172.6 C347.6,174.0 341.9,175.0 340.0,175.5 M374.1,162.7 C372.4,164.3 366.5,169.8 364.1,172.6 C361.8,175.5 361.5,176.8 359.9,179.7 C358.2,182.6 355.2,188.2 354.2,189.9 M340.0,154.1 C341.4,153.9 345.0,152.3 348.5,152.7 C352.1,153.2 357.0,155.3 361.3,157.0 C365.6,158.6 372.0,161.7 374.1,162.7 M340.0,186.8 C342.4,186.6 349.5,185.9 354.2,185.4 C358.9,184.9 363.7,184.5 368.4,184.0 C373.1,183.5 377.4,183.0 382.6,182.6 C387.8,182.1 393.4,181.8 399.7,181.1 C405.9,180.4 416.6,178.8 420.0,178.3 M399.7,158.4 C400.1,160.3 402.3,166.2 402.5,169.8 C402.7,173.3 401.1,176.4 401.1,179.7 C401.1,183.1 402.3,188.2 402.5,189.9 M409.6,149.9 C409.8,152.5 410.1,161.7 411.0,165.5 C412.0,169.3 413.8,171.0 415.3,172.6 C416.8,174.3 419.2,175.0 420.0,175.5 M378.4,130.0 C379.1,131.2 382.1,134.3 382.6,137.1 C383.1,139.9 381.4,145.4 381.2,147.0 M340.0,165.5 C341.4,165.3 345.4,164.6 348.5,164.1 C351.6,163.6 355.4,163.4 358.5,162.7 C361.5,162.0 365.6,160.3 367.0,159.8 M380.0,188.0 C382.2,187.7 388.8,187.1 393.3,186.6 C397.7,186.2 402.1,185.7 406.5,185.3 C410.9,184.9 415.4,184.0 419.8,184.0 C424.2,184.0 428.6,185.3 433.1,185.3 C437.5,185.3 441.8,184.4 446.3,184.0 C450.8,183.5 457.7,182.9 460.0,182.7 M380.0,197.2 C382.2,197.5 388.8,198.6 393.3,198.6 C397.7,198.6 402.1,197.7 406.5,197.2 C410.9,196.8 415.4,196.4 419.8,195.9 C424.2,195.5 428.6,195.3 433.1,194.6 C437.5,193.9 441.8,193.0 446.3,191.9 C450.8,190.8 457.7,188.6 460.0,188.0 M380.0,206.5 C382.2,206.7 388.8,207.9 393.3,207.9 C397.7,207.9 403.0,207.4 406.5,206.5 C410.1,205.6 411.8,203.4 414.5,202.5 C417.1,201.7 418.9,201.2 422.4,201.2 C426.0,201.2 431.3,202.8 435.7,202.5 C440.1,202.3 444.9,201.0 449.0,199.9 C453.0,198.8 458.1,196.6 460.0,195.9 M380.0,217.1 C382.2,217.4 388.8,218.5 393.3,218.5 C397.7,218.5 402.1,217.8 406.5,217.1 C410.9,216.5 415.8,215.4 419.8,214.5 C423.8,213.6 427.1,212.5 430.4,211.8 C433.7,211.2 438.1,210.7 439.7,210.5 M385.3,180.0 C385.1,182.2 384.4,188.8 384.0,193.3 C383.5,197.7 382.7,202.1 382.7,206.5 C382.7,210.9 384.0,214.9 384.0,219.8 C384.0,224.7 382.9,233.3 382.7,236.0 M399.9,180.0 C400.1,182.2 401.2,188.8 401.2,193.3 C401.2,197.7 399.7,202.1 399.9,206.5 C400.1,210.9 402.5,214.9 402.5,219.8 C402.5,224.7 400.3,233.3 399.9,236.0 M419.8,180.0 C419.6,182.2 419.3,189.5 418.5,193.3 C417.6,197.0 415.6,199.2 414.5,202.5 C413.4,205.9 412.5,209.6 411.8,213.2 C411.2,216.7 410.9,220.0 410.5,223.8 C410.1,227.6 409.4,233.9 409.2,236.0 M430.4,180.0 C430.2,182.2 429.7,188.8 429.1,193.3 C428.4,197.7 427.1,202.1 426.4,206.5 C425.8,210.9 425.8,214.9 425.1,219.8 C424.4,224.7 422.9,233.3 422.4,236.0 M439.7,180.0 C440.1,181.8 441.2,187.3 442.3,190.6 C443.4,193.9 444.8,197.2 446.3,199.9 C447.9,202.5 450.7,205.4 451.6,206.5 M393.3,180.0 C395.5,181.3 402.1,185.3 406.5,188.0 C410.9,190.6 415.4,192.8 419.8,195.9 C424.2,199.0 429.7,202.5 433.1,206.5 C436.4,210.5 439.0,215.8 439.7,219.8 C440.3,223.8 437.5,228.6 437.0,230.4 M380.0,226.4 C383.3,226.0 394.4,224.9 399.9,223.8 C405.4,222.7 408.7,220.7 413.2,219.8 C417.6,218.9 423.1,218.5 426.4,218.5 C429.7,218.5 431.9,219.6 433.1,219.8 M376.0,154.7 C378.9,154.4 387.7,153.8 393.5,152.9 C399.4,152.0 405.8,149.4 411.1,149.4 C416.4,149.4 420.7,152.0 425.1,152.9 C429.5,153.8 433.3,155.3 437.4,154.7 C441.5,154.1 444.9,150.9 449.7,149.4 C454.5,147.9 463.3,146.5 466.0,145.9 M423.4,131.9 C425.7,131.6 433.0,129.8 437.4,130.1 C441.8,130.4 445.9,131.9 449.7,133.6 C453.5,135.4 457.5,138.9 460.2,140.6 C462.9,142.4 465.0,143.6 466.0,144.1 M386.5,133.6 C387.7,134.2 390.3,137.4 393.5,137.1 C396.8,136.8 402.0,133.0 405.8,131.9 C409.6,130.7 414.6,130.4 416.4,130.1 M460.0,145.9 C461.8,145.9 466.7,146.2 470.5,145.9 C474.3,145.6 479.6,143.8 482.8,144.1 C486.0,144.4 486.3,149.1 489.8,147.6 C493.3,146.2 501.5,137.4 503.9,135.4 M533.7,102.0 C535.1,103.2 540.7,105.5 542.5,109.1 C544.2,112.6 545.1,119.0 544.2,123.1 C543.3,127.2 538.4,131.9 537.2,133.6" stroke="#f8d065" stroke-width="0.85" fill="none" stroke-linejoin="round"/>
<circle cx="374" cy="162" r="6" stroke="#f8d065" stroke-width="1" fill="none"/>
<circle cx="374" cy="162" r="10.5" stroke="#f8d065" stroke-width="1" fill="none"/>
<circle cx="413" cy="214" r="6.5" stroke="#f8d065" stroke-width="1" fill="none"/>
<path d="M544.0,152.8 L538.4,156.4 L532.7,158.5 L527.0,160.6 L523.4,163.5 L520.6,167.0 L517.0,169.9 L514.2,174.1 L512.0,179.8 L510.6,186.9 L511.0,192.2 L508.7,194.5 L503.1,196.7 L499.7,201.2 L497.5,205.7 L493.0,207.4 L486.2,208.0 L479.5,209.1 L475.0,211.4 L472.7,213.6 L477.2,213.1 L480.6,213.6 L479.5,217.0 L475.0,222.6 L470.5,220.4 L467.1,217.0 L462.6,214.7 L459.2,211.4 L457.0,206.9 L454.7,204.6 L450.2,204.1 L445.7,205.7 L441.2,209.1 L439.0,214.7 L436.7,219.2 L441.2,223.7 L433.4,226.0 L430.0,228.2 L426.0,236.0 L544.0,236.0 Z" fill="#9acdf7"/>
<g fill="#e36b6b"><circle cx="219.5" cy="94.3" r="1.2"/><circle cx="302" cy="109.5" r="1.2"/><circle cx="448" cy="97" r="1.2"/><circle cx="230" cy="150.5" r="1.2"/><circle cx="525.8" cy="160" r="1.2"/><circle cx="387.3" cy="184.3" r="1.2"/><circle cx="458.6" cy="179.1" r="1.2"/><circle cx="329.7" cy="224.3" r="1.2"/><circle cx="412.1" cy="216.8" r="1.2"/></g>
<g font-family="Liberation Sans, sans-serif" font-size="5.6" fill="#5a5a5a" stroke="#fff" stroke-width="0.6" paint-order="stroke" stroke-opacity="0.7">
<text x="209" y="92.2" textLength="21.5" lengthAdjust="spacingAndGlyphs">乌兰察布</text>
<text x="294.5" y="106.5" textLength="16.5" lengthAdjust="spacingAndGlyphs">张家口</text>
<text x="443.5" y="95.2" textLength="10.5" lengthAdjust="spacingAndGlyphs">承德</text>
<text x="224.5" y="148.2" textLength="11" lengthAdjust="spacingAndGlyphs">大同</text>
<text x="518.8" y="157" textLength="15" lengthAdjust="spacingAndGlyphs">秦皇岛</text>
<text x="381.6" y="182" textLength="12" lengthAdjust="spacingAndGlyphs">廊坊</text>
<text x="454.5" y="176.5" textLength="10" lengthAdjust="spacingAndGlyphs">唐山</text>
<text x="324.6" y="222.4" textLength="9.5" lengthAdjust="spacingAndGlyphs">保定</text>
</g>
<g font-family="Liberation Sans, sans-serif" font-size="7.2" fill="#2a2a2a" stroke="#fff" stroke-width="1" paint-order="stroke" stroke-opacity="0.85">
<text x="359.3" y="165.6" textLength="11" lengthAdjust="spacingAndGlyphs">北京</text>
<text x="407.4" y="224.2" textLength="11" lengthAdjust="spacingAndGlyphs">天津</text>
</g>
<path d="M374,157.5 L369.7,152.8 A4.5,4.5 0 1 1 378.3,152.8 Z" fill="#2a9d8c"/>
<circle cx="374" cy="152.3" r="2.4" fill="#b9e0d8"/>
<path d="M374.4,163.5 C372.80,161.40 369.90,159.50 369.90,156.6 A4.5,4.5 0 1 1 378.90,156.6 C378.90,159.50 376.00,161.40 374.4,163.5 Z" fill="#484848"/><circle cx="374.4" cy="156.6" r="2.1" fill="#c4c4c4"/><circle cx="374.4" cy="156.6" r="1" fill="#a0a0a0"/>
<path d="M307.3,219.0 C305.70,216.90 302.80,215.00 302.80,212.1 A4.5,4.5 0 1 1 311.80,212.1 C311.80,215.00 308.90,216.90 307.3,219.0 Z" fill="#484848"/><circle cx="307.3" cy="212.1" r="2.1" fill="#c4c4c4"/><circle cx="307.3" cy="212.1" r="1" fill="#a0a0a0"/>
<path d="M425.9,206.6 C424.30,204.50 421.40,202.60 421.40,199.7 A4.5,4.5 0 1 1 430.40,199.7 C430.40,202.60 427.50,204.50 425.9,206.6 Z" fill="#484848"/><circle cx="425.9" cy="199.7" r="2.1" fill="#c4c4c4"/><circle cx="425.9" cy="199.7" r="1" fill="#a0a0a0"/>
<path d="M427.7,218.4 C426.10,216.30 423.20,214.40 423.20,211.5 A4.5,4.5 0 1 1 432.20,211.5 C432.20,214.40 429.30,216.30 427.7,218.4 Z" fill="#484848"/><circle cx="427.7" cy="211.5" r="2.1" fill="#c4c4c4"/><circle cx="427.7" cy="211.5" r="1" fill="#a0a0a0"/>
<rect x="204" y="227.8" width="294" height="8.4" fill="#ffffff" opacity="0.72"/>
<text x="205.5" y="234.2" font-family="Liberation Sans, sans-serif" font-size="6" fill="#333" textLength="292" lengthAdjust="spacingAndGlyphs">© 2024 Baidu - GS(2023)3206号 - 甲测资字11111342 - 京ICP证030173号 - Data © 百度智图 &amp; <tspan fill="#3b5bd0">OpenStreetMap</tspan> &amp; <tspan fill="#3b5bd0">HERE</tspan></text>
<rect x="205" y="218.8" width="32" height="7.5" rx="1.5" fill="#fff" opacity="0.55"/>
<text x="206" y="225.4" font-family="Liberation Sans, sans-serif" font-size="7" font-weight="bold" fill="#e10602" textLength="9.6" lengthAdjust="spacingAndGlyphs">Bai</text>
<g fill="#2222ee"><circle cx="218.2" cy="219.4" r="1.25"/><circle cx="220.2" cy="217.4" r="1.25"/><circle cx="222.8" cy="217.4" r="1.25"/><circle cx="224.6" cy="219.6" r="1.25"/><ellipse cx="221.3" cy="223" rx="3.9" ry="2.9"/></g>
<path d="M219.6 223.8 Q221.3 221 223 223.8" stroke="#fff" stroke-width="0.7" fill="none"/>
<text x="226" y="225.3" font-family="Liberation Sans, sans-serif" font-size="6" font-weight="bold" fill="#e10602" textLength="10.2" lengthAdjust="spacingAndGlyphs">地图</text>
<g filter="none"><rect x="506.6" y="91.6" width="33" height="10" fill="#000" opacity="0.08"/></g>
<rect x="507" y="92" width="32.3" height="9.2" fill="#fff"/>
<rect x="507" y="92" width="16.2" height="9.2" fill="#86a6e4"/>
<text x="509.7" y="98.9" font-family="Liberation Sans, sans-serif" font-size="5.5" fill="#fff" textLength="11" lengthAdjust="spacingAndGlyphs">地图</text>
<text x="525.8" y="98.9" font-family="Liberation Sans, sans-serif" font-size="5.5" fill="#333" textLength="11" lengthAdjust="spacingAndGlyphs">混合</text>
</svg>

<div class="a" style="left:551.3px;top:86.5px;width:246.2px;height:1px;background:#eaeaea"></div>
<div class="a" style="left:770.5px;top:75px;width:10px;height:10px;border:1px solid #e6e6e6"></div>
<div class="a" style="left:783px;top:75px;width:10px;height:10px;border:1px solid #e6e6e6"></div>
<svg class="a" style="left:772px;top:77px" width="7" height="6" viewBox="0 0 7 6"><circle cx="2.5" cy="3" r="1.8" stroke="#333" stroke-width="1" fill="none"/><circle cx="5.6" cy="1.2" r="0.9" fill="#456"/><circle cx="5.6" cy="4.8" r="0.9" fill="#456"/></svg>
<div class="a" style="left:785px;top:77.5px;width:6px;height:5px;border:1px solid #667;background:#b8c8d8"></div>
<div class="a" style="left:555px;top:214px;width:238px;height:1px;background:#e6e6e6"></div>
<div class="a" style="left:557.5px;top:219.5px;width:43px;height:11px;border:1px solid #d9d9d9;background:#fff"></div>
<div class="a" style="left:566px;top:223px;width:5.5px;height:4.5px;border:0.8px solid #999"></div>

<div class="a" style="left:93px;top:258px;width:704.5px;height:1px;background:#eaeaea"></div>
<div class="a" style="left:769.5px;top:246px;width:10px;height:10px;border:1px solid #e6e6e6;border-radius:1px"></div>
<div class="a" style="left:782.5px;top:246px;width:10px;height:10px;border:1px solid #e6e6e6;border-radius:1px"></div>
<div class="a" style="left:772px;top:249.5px;width:5px;height:2px;background:#666"></div>
<div class="a" style="left:772px;top:252.5px;width:5px;height:1px;background:#555"></div>
<svg class="a" style="left:783.5px;top:247px" width="8" height="9" viewBox="0 0 8 9"><rect x="0.8" y="3.2" width="6.4" height="4.6" fill="#e4e6ea"/><circle cx="3.5" cy="1.6" r="0.9" fill="#333"/><circle cx="6.2" cy="1.6" r="0.9" fill="#5a6a80"/><circle cx="0.9" cy="1.6" r="0.5" fill="#aaa"/></svg>
<div class="a" style="left:95px;top:261px;width:112px;height:34px;background:#f6f6f6;border:1px solid #e3e3e3"></div>
<div class="a" style="left:95px;top:261px;width:22px;height:34px;background:#46a868"></div>
<svg class="a" style="left:98px;top:270px" width="16" height="16" viewBox="0 0 16 16"><g fill="none" stroke="#fff" stroke-width="1.1"><path d="M2.6 7.8 A5.6 5.6 0 0 1 13.4 7.8"/><path d="M4.6 8.4 A3.5 3.5 0 0 1 11.4 8.4"/></g><circle cx="8" cy="8.3" r="1" fill="#fff"/><rect x="7.5" y="8" width="1" height="2.5" fill="#fff"/><rect x="1.4" y="10" width="13.4" height="5" rx="0.8" fill="#fff"/><rect x="3.2" y="12" width="1.3" height="1.2" fill="#46a868"/><rect x="5.4" y="12" width="1.3" height="1.2" fill="#46a868"/></svg>
<svg class="a" style="left:198.5px;top:264px" width="7" height="7" viewBox="0 0 7 7"><circle cx="2.7" cy="2.7" r="1.9" stroke="#333" stroke-width="1.1" fill="none"/><path d="M4 4 L6.2 6.2" stroke="#333" stroke-width="1.3"/></svg>
<div class="a" style="left:211px;top:261px;width:112px;height:34px;background:#f6f6f6;border:1px solid #e3e3e3"></div>
<div class="a" style="left:211px;top:261px;width:22px;height:34px;background:#46a868"></div>
<svg class="a" style="left:214px;top:270px" width="16" height="16" viewBox="0 0 16 16"><g fill="none" stroke="#fff" stroke-width="1.1"><path d="M2.6 7.8 A5.6 5.6 0 0 1 13.4 7.8"/><path d="M4.6 8.4 A3.5 3.5 0 0 1 11.4 8.4"/></g><circle cx="8" cy="8.3" r="1" fill="#fff"/><rect x="7.5" y="8" width="1" height="2.5" fill="#fff"/><rect x="1.4" y="10" width="13.4" height="5" rx="0.8" fill="#fff"/><rect x="3.2" y="12" width="1.3" height="1.2" fill="#46a868"/><rect x="5.4" y="12" width="1.3" height="1.2" fill="#46a868"/></svg>
<svg class="a" style="left:314.5px;top:264px" width="7" height="7" viewBox="0 0 7 7"><circle cx="2.7" cy="2.7" r="1.9" stroke="#333" stroke-width="1.1" fill="none"/><path d="M4 4 L6.2 6.2" stroke="#333" stroke-width="1.3"/></svg>
<div class="a" style="left:327.5px;top:261px;width:112px;height:34px;background:#f6f6f6;border:1px solid #e3e3e3"></div>
<div class="a" style="left:327.5px;top:261px;width:22px;height:34px;background:#46a868"></div>
<svg class="a" style="left:330.5px;top:270px" width="16" height="16" viewBox="0 0 16 16"><g fill="none" stroke="#fff" stroke-width="1.1"><path d="M2.6 7.8 A5.6 5.6 0 0 1 13.4 7.8"/><path d="M4.6 8.4 A3.5 3.5 0 0 1 11.4 8.4"/></g><circle cx="8" cy="8.3" r="1" fill="#fff"/><rect x="7.5" y="8" width="1" height="2.5" fill="#fff"/><rect x="1.4" y="10" width="13.4" height="5" rx="0.8" fill="#fff"/><rect x="3.2" y="12" width="1.3" height="1.2" fill="#46a868"/><rect x="5.4" y="12" width="1.3" height="1.2" fill="#46a868"/></svg>
<svg class="a" style="left:431.0px;top:264px" width="7" height="7" viewBox="0 0 7 7"><circle cx="2.7" cy="2.7" r="1.9" stroke="#333" stroke-width="1.1" fill="none"/><path d="M4 4 L6.2 6.2" stroke="#333" stroke-width="1.3"/></svg>
<div class="a" style="left:444px;top:261px;width:112px;height:34px;background:#f6f6f6;border:1px solid #e3e3e3"></div>
<div class="a" style="left:444px;top:261px;width:22px;height:34px;background:#46a868"></div>
<svg class="a" style="left:447px;top:270px" width="16" height="16" viewBox="0 0 16 16"><g fill="none" stroke="#fff" stroke-width="1.1"><path d="M2.6 7.8 A5.6 5.6 0 0 1 13.4 7.8"/><path d="M4.6 8.4 A3.5 3.5 0 0 1 11.4 8.4"/></g><circle cx="8" cy="8.3" r="1" fill="#fff"/><rect x="7.5" y="8" width="1" height="2.5" fill="#fff"/><rect x="1.4" y="10" width="13.4" height="5" rx="0.8" fill="#fff"/><rect x="3.2" y="12" width="1.3" height="1.2" fill="#46a868"/><rect x="5.4" y="12" width="1.3" height="1.2" fill="#46a868"/></svg>
<svg class="a" style="left:547.5px;top:264px" width="7" height="7" viewBox="0 0 7 7"><circle cx="2.7" cy="2.7" r="1.9" stroke="#333" stroke-width="1.1" fill="none"/><path d="M4 4 L6.2 6.2" stroke="#333" stroke-width="1.3"/></svg>


<svg class="a" style="left:0;top:0;z-index:50" width="800" height="422" viewBox="0 0 800 422">
<g font-family="Liberation Sans, sans-serif">
<text x="25.30" y="16.04" font-size="11.5" fill="#ffffff" textLength="86" lengthAdjust="spacingAndGlyphs">综合环境监控云平台</text>
<text x="123.00" y="15.21" font-size="7.24" fill="#ffffff" textLength="12.6" lengthAdjust="spacingAndGlyphs">首页</text>
<text x="152.50" y="15.17" font-size="7.13" fill="#ffffff" textLength="30.5" lengthAdjust="spacingAndGlyphs">大屏可视化</text>
<text x="638.00" y="16.11" font-size="7.24" fill="#ffffff" textLength="25.5" lengthAdjust="spacingAndGlyphs">耀目古窑</text>
<text x="730.60" y="15.81" font-size="7.24" fill="#ffffff" textLength="25" lengthAdjust="spacingAndGlyphs">演示账号</text>
<text x="772.50" y="15.81" font-size="7.24" fill="#ffffff" textLength="12.8" lengthAdjust="spacingAndGlyphs">退出</text>
<text x="21.00" y="38.69" font-size="7.47" fill="#ffffff" textLength="13" lengthAdjust="spacingAndGlyphs">首页</text>
<text x="21.00" y="58.09" font-size="7.47" fill="#dfe2e8" textLength="24.5" lengthAdjust="spacingAndGlyphs">在线监控</text>
<text x="21.00" y="77.79" font-size="7.47" fill="#dfe2e8" textLength="24.5" lengthAdjust="spacingAndGlyphs">数据中心</text>
<text x="20.90" y="97.69" font-size="7.47" fill="#dfe2e8" textLength="36" lengthAdjust="spacingAndGlyphs">LED大屏管理</text>
<text x="20.90" y="116.99" font-size="7.47" fill="#dfe2e8" textLength="36" lengthAdjust="spacingAndGlyphs">LED投屏显示</text>
<text x="21.00" y="136.49" font-size="7.47" fill="#dfe2e8" textLength="24.5" lengthAdjust="spacingAndGlyphs">系统管理</text>
<text x="229.50" y="45.81" font-size="7.24" fill="#ffffff" textLength="25.5" lengthAdjust="spacingAndGlyphs">设备总数</text>
<text x="243.00" y="57.00" font-size="10.8" fill="#ffffff" textLength="12" lengthAdjust="spacingAndGlyphs">57</text>
<text x="406.50" y="45.81" font-size="7.24" fill="#ffffff" textLength="25.5" lengthAdjust="spacingAndGlyphs">在线设备</text>
<text x="425.80" y="57.00" font-size="10.8" fill="#ffffff" textLength="6.2" lengthAdjust="spacingAndGlyphs">5</text>
<text x="583.50" y="45.81" font-size="7.24" fill="#ffffff" textLength="25.5" lengthAdjust="spacingAndGlyphs">报警设备</text>
<text x="602.80" y="57.00" font-size="10.8" fill="#ffffff" textLength="6.2" lengthAdjust="spacingAndGlyphs">0</text>
<text x="761.50" y="45.81" font-size="7.24" fill="#ffffff" textLength="25.5" lengthAdjust="spacingAndGlyphs">离线设备</text>
<text x="775.00" y="57.00" font-size="10.8" fill="#ffffff" textLength="12" lengthAdjust="spacingAndGlyphs">52</text>
<text x="96.80" y="83.35" font-size="7.36" fill="#333333" textLength="25.5" lengthAdjust="spacingAndGlyphs">设备列表</text>
<text x="206.10" y="82.85" font-size="7.36" fill="#333333" textLength="25" lengthAdjust="spacingAndGlyphs">地图信息</text>
<text x="555.50" y="83.15" font-size="7.36" fill="#333333" textLength="25" lengthAdjust="spacingAndGlyphs">设备信息</text>
<text x="96.80" y="253.65" font-size="7.36" fill="#333333" textLength="25" lengthAdjust="spacingAndGlyphs">因子信息</text>
<text x="119.00" y="95.67" font-size="7.13" fill="#333333" textLength="49" lengthAdjust="spacingAndGlyphs">济南莱综合产业区</text>
<text x="130.00" y="106.12" font-size="7.13" fill="#333333" textLength="33" lengthAdjust="spacingAndGlyphs">康园小区(8动)</text>
<text x="130.00" y="116.57" font-size="7.13" fill="#333333" textLength="7" lengthAdjust="spacingAndGlyphs">09</text>
<text x="130.00" y="127.02" font-size="7.13" fill="#333333" textLength="46" lengthAdjust="spacingAndGlyphs">GU监测点位移监测站</text>
<text x="130.00" y="137.47" font-size="7.13" fill="#333333" textLength="24" lengthAdjust="spacingAndGlyphs">气象监测</text>
<text x="130.00" y="147.92" font-size="7.13" fill="#333333" textLength="48" lengthAdjust="spacingAndGlyphs">消防水位监测系统</text>
<text x="138.00" y="158.37" font-size="7.13" fill="#333333" textLength="50.5" lengthAdjust="spacingAndGlyphs">消防水位监测系统</text>
<text x="130.00" y="168.82" font-size="7.13" fill="#333333" textLength="24" lengthAdjust="spacingAndGlyphs">监测系统</text>
<text x="130.00" y="179.27" font-size="7.13" fill="#333333" textLength="7" lengthAdjust="spacingAndGlyphs">ai</text>
<text x="130.00" y="189.72" font-size="7.13" fill="#333333" textLength="48.5" lengthAdjust="spacingAndGlyphs">入口防汛报警器</text>
<text x="130.00" y="200.17" font-size="7.13" fill="#333333" textLength="30" lengthAdjust="spacingAndGlyphs">垃圾监测</text>
<text x="130.00" y="210.62" font-size="7.13" fill="#333333" textLength="48.5" lengthAdjust="spacingAndGlyphs">综合大厨环境监测</text>
<text x="130.00" y="221.07" font-size="7.13" fill="#333333" textLength="42.5" lengthAdjust="spacingAndGlyphs">自动雨量气象站</text>
<text x="130.00" y="231.52" font-size="7.13" fill="#333333" textLength="36" lengthAdjust="spacingAndGlyphs">智能精制工厂</text>
<text x="555.30" y="98.67" font-size="7.13" fill="#4a4a4a" font-weight="bold" textLength="26" lengthAdjust="spacingAndGlyphs">设备名称:</text>
<text x="588.20" y="98.67" font-size="7.13" fill="#4a4a4a" textLength="48.5" lengthAdjust="spacingAndGlyphs">消防水位监测系统</text>
<text x="555.30" y="112.52" font-size="7.13" fill="#4a4a4a" font-weight="bold" textLength="26" lengthAdjust="spacingAndGlyphs">设备地址:</text>
<text x="588.20" y="112.52" font-size="7.13" fill="#4a4a4a" textLength="28.5" lengthAdjust="spacingAndGlyphs">10017295</text>
<text x="555.30" y="126.37" font-size="7.13" fill="#4a4a4a" font-weight="bold" textLength="26" lengthAdjust="spacingAndGlyphs">所属区域:</text>
<text x="588.20" y="126.37" font-size="7.13" fill="#4a4a4a" textLength="48.5" lengthAdjust="spacingAndGlyphs">消防水位监测系统</text>
<text x="555.30" y="140.22" font-size="7.13" fill="#4a4a4a" font-weight="bold" textLength="26" lengthAdjust="spacingAndGlyphs">报警数据:</text>
<text x="588.30" y="140.22" font-size="7.13" fill="#4a4a4a" textLength="6.2" lengthAdjust="spacingAndGlyphs">开</text>
<text x="555.30" y="154.07" font-size="7.13" fill="#4a4a4a" font-weight="bold" textLength="26" lengthAdjust="spacingAndGlyphs">报警类型:</text>
<text x="588.30" y="154.07" font-size="7.13" fill="#4a4a4a" textLength="6.2" lengthAdjust="spacingAndGlyphs">无</text>
<text x="555.30" y="167.92" font-size="7.13" fill="#4a4a4a" font-weight="bold" textLength="26" lengthAdjust="spacingAndGlyphs">标记位置:</text>
<text x="588.30" y="167.92" font-size="7.13" fill="#4a4a4a" textLength="12.4" lengthAdjust="spacingAndGlyphs">开启</text>
<text x="555.30" y="181.77" font-size="7.13" fill="#4a4a4a" font-weight="bold" textLength="38" lengthAdjust="spacingAndGlyphs">离线判断间隔:</text>
<text x="599.50" y="181.77" font-size="7.13" fill="#4a4a4a" textLength="23.5" lengthAdjust="spacingAndGlyphs">999分钟</text>
<text x="555.30" y="195.62" font-size="7.13" fill="#4a4a4a" font-weight="bold" textLength="38" lengthAdjust="spacingAndGlyphs">保存数据间隔:</text>
<text x="599.50" y="195.62" font-size="7.13" fill="#4a4a4a" textLength="16.5" lengthAdjust="spacingAndGlyphs">1分钟</text>
<text x="559.90" y="209.47" font-size="7.13" fill="#333333" textLength="30.5" lengthAdjust="spacingAndGlyphs">摄像头信息</text>
<text x="574.00" y="227.57" font-size="7.13" fill="#333333" textLength="19" lengthAdjust="spacingAndGlyphs">芝阳镇</text>
<text x="140.80" y="276.61" font-size="7.24" fill="#333333" textLength="41.5" lengthAdjust="spacingAndGlyphs">消防水位1(cm)</text>
<text x="152.20" y="287.30" font-size="9.2" fill="#3cb35a" textLength="20.2" lengthAdjust="spacingAndGlyphs">132.0</text>
<text x="256.80" y="276.61" font-size="7.24" fill="#333333" textLength="41.5" lengthAdjust="spacingAndGlyphs">消防水位2(cm)</text>
<text x="268.20" y="287.30" font-size="9.2" fill="#3cb35a" textLength="20.2" lengthAdjust="spacingAndGlyphs">221.0</text>
<text x="373.30" y="276.61" font-size="7.24" fill="#333333" textLength="41.5" lengthAdjust="spacingAndGlyphs">消防水位3(cm)</text>
<text x="384.70" y="287.30" font-size="9.2" fill="#3cb35a" textLength="20.2" lengthAdjust="spacingAndGlyphs">158.0</text>
<text x="489.80" y="276.61" font-size="7.24" fill="#333333" textLength="41.5" lengthAdjust="spacingAndGlyphs">消防水位4(cm)</text>
<text x="501.20" y="287.30" font-size="9.2" fill="#3cb35a" textLength="20.2" lengthAdjust="spacingAndGlyphs">253.0</text>
</g></svg>
<svg class="a" style="left:713.7px;top:3.6px;z-index:70" width="8" height="7.2" viewBox="0 0 8 7.2"><text x="3.9" y="5.9" font-family="Liberation Sans, sans-serif" font-size="6" font-weight="bold" fill="#fff" text-anchor="middle">1</text></svg>
</body></html>
